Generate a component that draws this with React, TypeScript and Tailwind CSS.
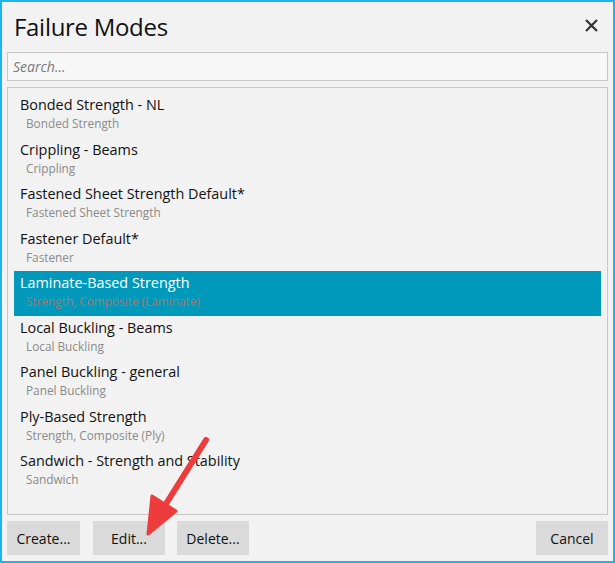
import React from 'react';

const modes = [
  { name: 'Bonded Strength - NL', type: 'Bonded Strength' },
  { name: 'Crippling - Beams', type: 'Crippling' },
  { name: 'Fastened Sheet Strength Default*', type: 'Fastened Sheet Strength' },
  { name: 'Fastener Default*', type: 'Fastener' },
  { name: 'Laminate-Based Strength', type: 'Strength, Composite (Laminate)' },
  { name: 'Local Buckling - Beams', type: 'Local Buckling' },
  { name: 'Panel Buckling - general', type: 'Panel Buckling' },
  { name: 'Ply-Based Strength', type: 'Strength, Composite (Ply)' },
  { name: 'Sandwich - Strength and Stability', type: 'Sandwich' },
];

export default function App() {
  const selected = 4;

  return (
    <div
      className="relative w-[615px] h-[563px] bg-[#f2f2f2] border-2 border-[#1cb5ec] flex flex-col text-[#111]"
      style={{ fontFamily: '"Open Sans", "Noto Sans", sans-serif' }}
    >
      {/* Header */}
      <div className="flex items-center justify-between h-[50px] pl-[12px] pr-[15px]">
        <h1 className="text-[24px] leading-none font-normal tracking-[-0.3px] mt-[-1px]">Failure Modes</h1>
        <svg width="13" height="13" viewBox="0 0 13 13" className="mt-[-4px]">
          <path d="M1 1 L12 12 M12 1 L1 12" stroke="#333" strokeWidth="2.2" />
        </svg>
      </div>

      {/* Search */}
      <div className="px-[5px]">
        <input
          placeholder="Search..."
          className="w-full h-[29px] bg-[#f7f7f7] border border-[#c8c8c8] px-[5px] text-[14px] italic text-[#444] placeholder:text-[#777] outline-none"
        />
      </div>

      {/* List */}
      <div className="mx-[5px] mt-[6px] h-[428px] border border-[#c8c8c8] px-[6px] pt-[5px]">
        {modes.map((m, i) => (
          <div
            key={m.name}
            className={`h-[44.5px] pl-[6px] pt-[2px] ${i === selected ? 'bg-[#0099bc]' : ''}`}
          >
            <div className={`text-[14.4px] leading-[20px] ${i === selected ? 'text-white' : 'text-[#111]'}`}>
              {m.name}
            </div>
            <div
              className={`text-[11.8px] leading-[16px] pl-[6px] ${i === selected ? 'text-[#a9766f]' : 'text-[#8a8a8a]'}`}
            >
              {m.type}
            </div>
          </div>
        ))}
      </div>

      {/* Buttons */}
      <div className="flex items-center px-[5px] mt-[6px]">
        <button className="w-[73px] h-[34px] bg-[#dadada] text-[14px] text-[#111]">Create...</button>
        <button className="w-[72px] h-[34px] bg-[#dadada] text-[14px] text-[#111] ml-[13px]">Edit...</button>
        <button className="w-[72px] h-[34px] bg-[#dadada] text-[14px] text-[#111] ml-[12px]">Delete...</button>
        <button className="w-[72px] h-[34px] bg-[#dadada] text-[14px] text-[#111] ml-auto">Cancel</button>
      </div>

      {/* Annotation arrow */}
      <svg className="absolute left-0 top-0 pointer-events-none" width="615" height="563">
        <line x1="204" y1="438" x2="162" y2="505" stroke="#ee3b3b" strokeWidth="6" strokeLinecap="round" />
        <polygon points="146,532 150,494 174,509" fill="#ee3b3b" stroke="#ee3b3b" strokeWidth="3" strokeLinejoin="round" />
      </svg>
    </div>
  );
}
